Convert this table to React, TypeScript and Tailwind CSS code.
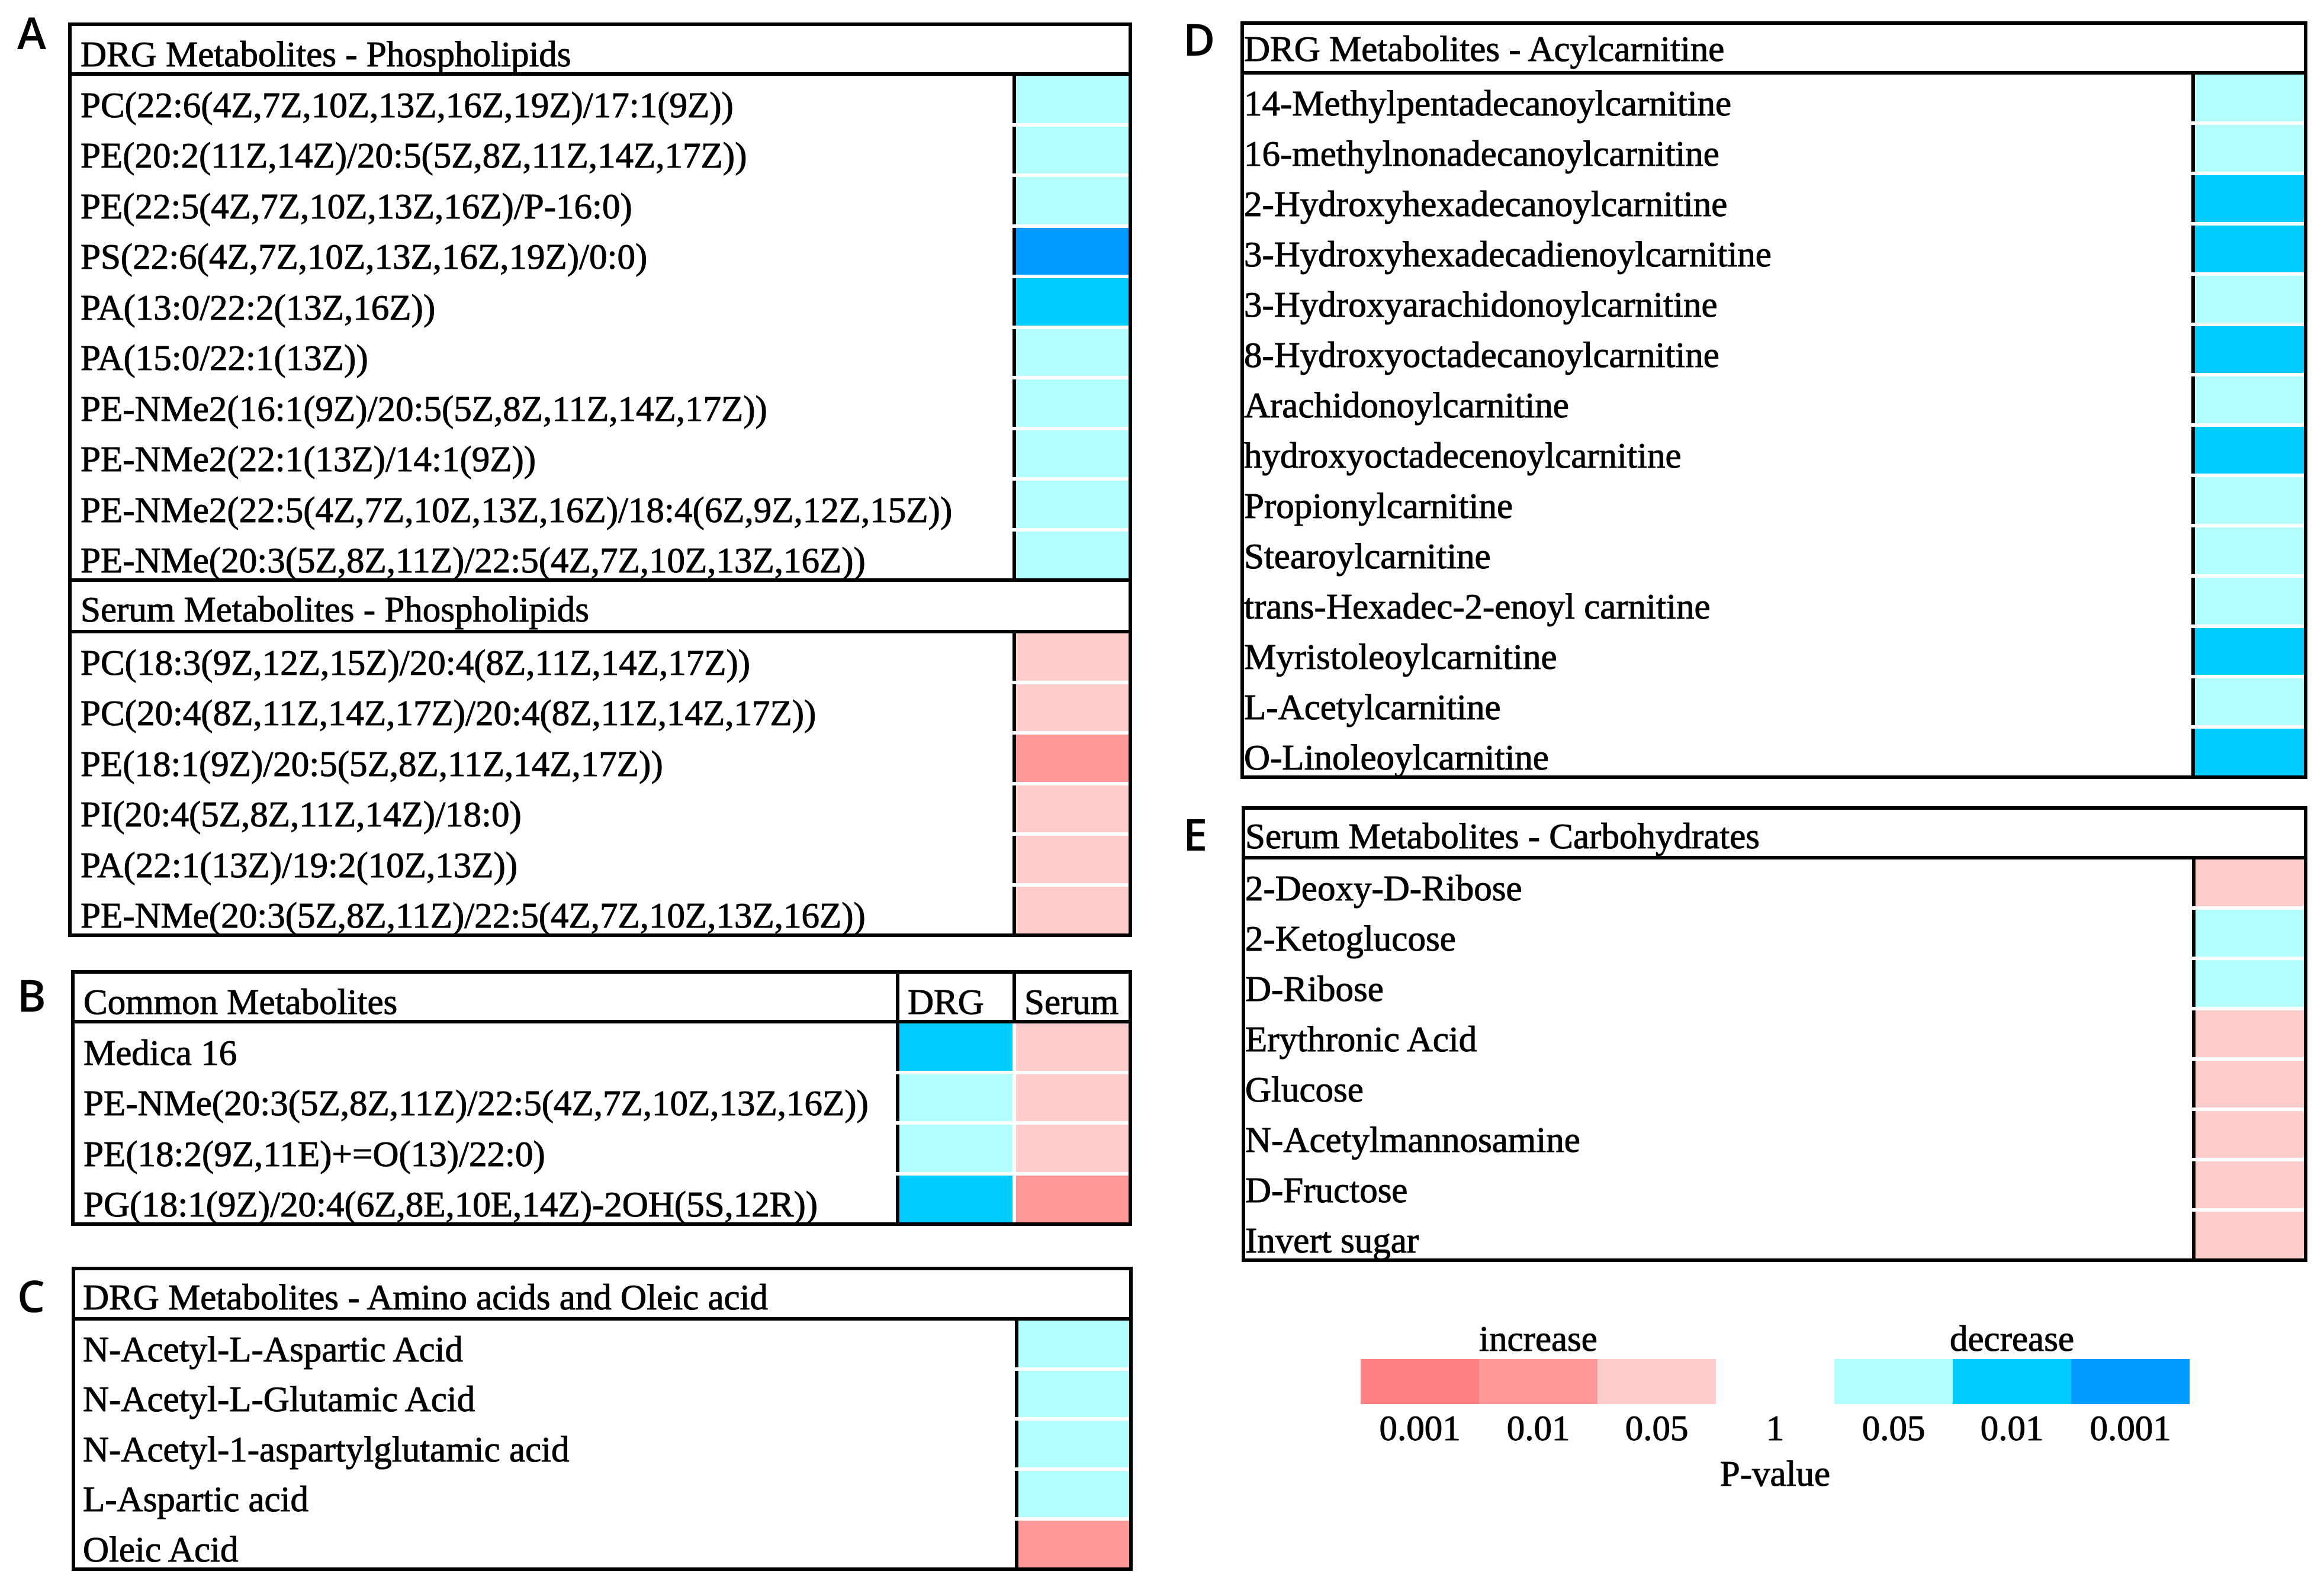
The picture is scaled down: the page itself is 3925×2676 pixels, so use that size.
const L = "bg-[#b3ffff]";
const M = "bg-[#00ccff]";
const H = "bg-[#0099ff]";
const P1 = "bg-[#ffcccc]";
const P2 = "bg-[#ff9999]";

interface Row {
  name: string;
  cells: string[];
}

interface Group {
  title: string;
  head: string;
  pb: string;
  rows: Row[];
}

interface Col {
  w: string;
  edge: string;
  label?: string;
}

interface TableProps {
  width: string;
  groups: Group[];
  pitch: string;
  cell: string;
  textPl: string;
  cols: Col[];
}

// scanned figure text is a little heavier than plain Times, so thicken it slightly
const serif = "[font-family:'Liberation_Serif','Times_New_Roman',serif] [-webkit-text-stroke:1px_black]";

// head heights include the 6px bottom rule (border-box)
function MetaTable({ width, groups, pitch, cell, textPl, cols }: TableProps) {
  const labelled = cols.some((c) => c.label);
  return (
    <div className={`${width} border-[6px] border-black text-[61px] leading-none text-black ${serif}`}>
      {groups.map((g, gi) => (
        <div key={g.title} className={gi > 0 ? "border-t-[6px] border-black" : ""}>
          <div className={`flex ${g.head} border-b-[6px] border-black`}>
            <div className={`flex-1 flex items-end whitespace-nowrap ${textPl} ${g.pb}`}>{g.title}</div>
            {labelled &&
              cols.map((c) => (
                <div key={c.label} className={`${c.w} border-l-[6px] border-black flex items-end pl-[14px] ${g.pb}`}>
                  {c.label}
                </div>
              ))}
          </div>
          {g.rows.map((r, ri) => (
            <div key={r.name + ri} className={`flex items-start ${ri === g.rows.length - 1 ? cell : pitch}`}>
              <div className={`flex-1 ${cell} flex items-end whitespace-nowrap ${textPl}`}>{r.name}</div>
              {r.cells.map((c, ci) => (
                <div key={ci} className={`${cols[ci].w} ${cell} flex`}>
                  <div className={`w-[6px] ${cols[ci].edge}`} />
                  <div className={`flex-1 ${c}`} />
                </div>
              ))}
            </div>
          ))}
        </div>
      ))}
    </div>
  );
}

function Label({ text, w, offset }: { text: string; w: string; offset: string }) {
  return (
    <div
      className={`${w} ${offset} shrink-0 text-[74px] leading-none font-semibold text-black [font-family:'Open_Sans',sans-serif]`}
    >
      {text}
    </div>
  );
}

const drgPhospho: Row[] = [
  { name: "PC(22:6(4Z,7Z,10Z,13Z,16Z,19Z)/17:1(9Z))", cells: [L] },
  { name: "PE(20:2(11Z,14Z)/20:5(5Z,8Z,11Z,14Z,17Z))", cells: [L] },
  { name: "PE(22:5(4Z,7Z,10Z,13Z,16Z)/P-16:0)", cells: [L] },
  { name: "PS(22:6(4Z,7Z,10Z,13Z,16Z,19Z)/0:0)", cells: [H] },
  { name: "PA(13:0/22:2(13Z,16Z))", cells: [M] },
  { name: "PA(15:0/22:1(13Z))", cells: [L] },
  { name: "PE-NMe2(16:1(9Z)/20:5(5Z,8Z,11Z,14Z,17Z))", cells: [L] },
  { name: "PE-NMe2(22:1(13Z)/14:1(9Z))", cells: [L] },
  { name: "PE-NMe2(22:5(4Z,7Z,10Z,13Z,16Z)/18:4(6Z,9Z,12Z,15Z))", cells: [L] },
  { name: "PE-NMe(20:3(5Z,8Z,11Z)/22:5(4Z,7Z,10Z,13Z,16Z))", cells: [L] },
];

const serumPhospho: Row[] = [
  { name: "PC(18:3(9Z,12Z,15Z)/20:4(8Z,11Z,14Z,17Z))", cells: [P1] },
  { name: "PC(20:4(8Z,11Z,14Z,17Z)/20:4(8Z,11Z,14Z,17Z))", cells: [P1] },
  { name: "PE(18:1(9Z)/20:5(5Z,8Z,11Z,14Z,17Z))", cells: [P2] },
  { name: "PI(20:4(5Z,8Z,11Z,14Z)/18:0)", cells: [P1] },
  { name: "PA(22:1(13Z)/19:2(10Z,13Z))", cells: [P1] },
  { name: "PE-NMe(20:3(5Z,8Z,11Z)/22:5(4Z,7Z,10Z,13Z,16Z))", cells: [P1] },
];

const common: Row[] = [
  { name: "Medica 16", cells: [M, P1] },
  { name: "PE-NMe(20:3(5Z,8Z,11Z)/22:5(4Z,7Z,10Z,13Z,16Z))", cells: [L, P1] },
  { name: "PE(18:2(9Z,11E)+=O(13)/22:0)", cells: [L, P1] },
  { name: "PG(18:1(9Z)/20:4(6Z,8E,10E,14Z)-2OH(5S,12R))", cells: [M, P2] },
];

const amino: Row[] = [
  { name: "N-Acetyl-L-Aspartic Acid", cells: [L] },
  { name: "N-Acetyl-L-Glutamic Acid", cells: [L] },
  { name: "N-Acetyl-1-aspartylglutamic acid", cells: [L] },
  { name: "L-Aspartic acid", cells: [L] },
  { name: "Oleic Acid", cells: [P2] },
];

const acyl: Row[] = [
  { name: "14-Methylpentadecanoylcarnitine", cells: [L] },
  { name: "16-methylnonadecanoylcarnitine", cells: [L] },
  { name: "2-Hydroxyhexadecanoylcarnitine", cells: [M] },
  { name: "3-Hydroxyhexadecadienoylcarnitine", cells: [M] },
  { name: "3-Hydroxyarachidonoylcarnitine", cells: [L] },
  { name: "8-Hydroxyoctadecanoylcarnitine", cells: [M] },
  { name: "Arachidonoylcarnitine", cells: [L] },
  { name: "hydroxyoctadecenoylcarnitine", cells: [M] },
  { name: "Propionylcarnitine", cells: [L] },
  { name: "Stearoylcarnitine", cells: [L] },
  { name: "trans-Hexadec-2-enoyl carnitine", cells: [L] },
  { name: "Myristoleoylcarnitine", cells: [M] },
  { name: "L-Acetylcarnitine", cells: [L] },
  { name: "O-Linoleoylcarnitine", cells: [M] },
];

const carbs: Row[] = [
  { name: "2-Deoxy-D-Ribose", cells: [P1] },
  { name: "2-Ketoglucose", cells: [L] },
  { name: "D-Ribose", cells: [L] },
  { name: "Erythronic Acid", cells: [P1] },
  { name: "Glucose", cells: [P1] },
  { name: "N-Acetylmannosamine", cells: [P1] },
  { name: "D-Fructose", cells: [P1] },
  { name: "Invert sugar", cells: [P1] },
];

const legendCells = ["bg-[#ff8080]", P2, P1, "bg-white", L, M, H];
const legendTicks = ["0.001", "0.01", "0.05", "1", "0.05", "0.01", "0.001"];

export default function App() {
  return (
    <div className="w-[3925px] h-[2676px] bg-white flex overflow-hidden">
      {/* left column: A, B, C */}
      <div className="w-[1998px] shrink-0 pl-[29px] pt-[38px] flex flex-col">
        <div className="flex">
          <Label text="A" w="w-[86px]" offset="-mt-[20px]" />
          <MetaTable
            width="w-[1797px]"
            pitch="h-[85.5px]"
            cell="h-[79.5px]"
            textPl="pl-[15px]"
            cols={[{ w: "w-[196px]", edge: "bg-black" }]}
            groups={[
              { title: "DRG Metabolites - Phospholipids", head: "h-[84px]", pb: "pb-0", rows: drgPhospho },
              { title: "Serum Metabolites - Phospholipids", head: "h-[87px]", pb: "pb-[4px]", rows: serumPhospho },
            ]}
          />
        </div>
        <div className="flex mt-[56px]">
          <Label text="B" w="w-[91px]" offset="mt-[5px]" />
          <MetaTable
            width="w-[1792px]"
            pitch="h-[85.5px]"
            cell="h-[79.5px]"
            textPl="pl-[15px]"
            cols={[
              { w: "w-[197px]", edge: "bg-black", label: "DRG" },
              { w: "w-[196px]", edge: "bg-white", label: "Serum" },
            ]}
            groups={[{ title: "Common Metabolites", head: "h-[84px]", pb: "pb-0", rows: common }]}
          />
        </div>
        <div className="flex mt-[69px]">
          <Label text="C" w="w-[92px]" offset="mt-[12px]" />
          <MetaTable
            width="w-[1792px]"
            pitch="h-[84.5px]"
            cell="h-[78.5px]"
            textPl="pl-[13px]"
            cols={[{ w: "w-[193px]", edge: "bg-black" }]}
            groups={[
              { title: "DRG Metabolites - Amino acids and Oleic acid", head: "h-[85px]", pb: "pb-[3px]", rows: amino },
            ]}
          />
        </div>
      </div>

      {/* right column: D, E, legend */}
      <div className="flex-1 pt-[36px] flex flex-col">
        <div className="flex">
          <Label text="D" w="w-[97px]" offset="-mt-[7px]" />
          <MetaTable
            width="w-[1802px]"
            pitch="h-[85px]"
            cell="h-[79px]"
            textPl="pl-0"
            cols={[{ w: "w-[190px]", edge: "bg-black" }]}
            groups={[{ title: "DRG Metabolites - Acylcarnitine", head: "h-[84px]", pb: "pb-[7px]", rows: acyl }]}
          />
        </div>
        <div className="flex mt-[46px]">
          <Label text="E" w="w-[99px]" offset="mt-[10px]" />
          <MetaTable
            width="w-[1800px]"
            pitch="h-[85px]"
            cell="h-[79px]"
            textPl="pl-0"
            cols={[{ w: "w-[189px]", edge: "bg-black" }]}
            groups={[{ title: "Serum Metabolites - Carbohydrates", head: "h-[84px]", pb: "pb-[3px]", rows: carbs }]}
          />
        </div>

        <div className={`ml-[300px] mt-[99px] w-[1400px] text-[61px] leading-none text-black ${serif}`}>
          <div className="flex">
            <div className="w-[600px] text-center">increase</div>
            <div className="w-[200px]" />
            <div className="w-[600px] text-center">decrease</div>
          </div>
          <div className="flex h-[76px] mt-[4px]">
            {legendCells.map((c, i) => (
              <div key={i} className={`w-[200px] ${c}`} />
            ))}
          </div>
          <div className="flex mt-[10px]">
            {legendTicks.map((t, i) => (
              <div key={i} className="w-[200px] text-center">
                {t}
              </div>
            ))}
          </div>
          <div className="mt-[16px] text-center">P-value</div>
        </div>
      </div>
    </div>
  );
}
